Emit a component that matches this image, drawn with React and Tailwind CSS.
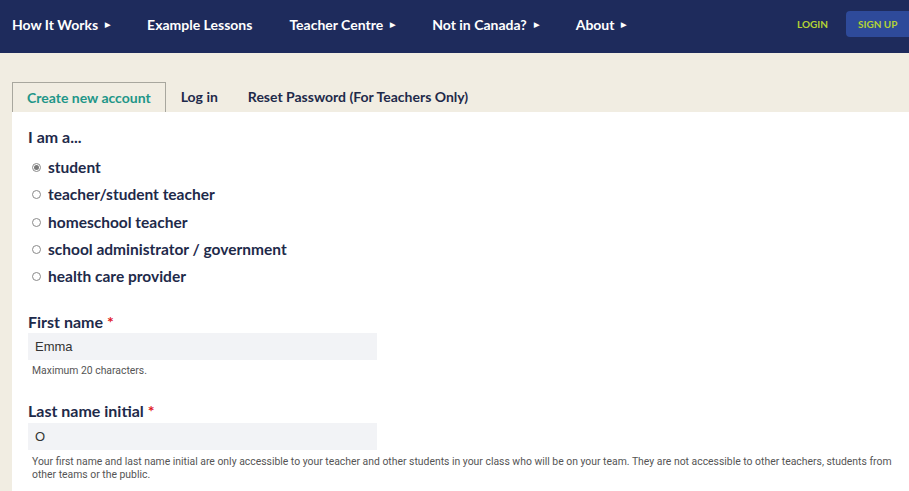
import React from "react";

const navItems = [
  { label: "How It Works", arrow: true },
  { label: "Example Lessons", arrow: false },
  { label: "Teacher Centre", arrow: true },
  { label: "Not in Canada?", arrow: true },
  { label: "About", arrow: true },
];

const roles = [
  "student",
  "teacher/student teacher",
  "homeschool teacher",
  "school administrator / government",
  "health care provider",
];

const Radio = ({ checked }) => (
  <span className="flex h-[9px] w-[9px] items-center justify-center rounded-full border border-[#8a8a8a] bg-white">
    {checked && <span className="h-[5px] w-[5px] rounded-full bg-[#7a7a7a]" />}
  </span>
);

const App = () => {
  return (
    <div className="min-h-[491px] w-full bg-[#f1ede2] font-['Lato',sans-serif] text-[#1e2a4a]">
      <nav className="flex h-[53px] items-center bg-[#1e2b5c] pb-[5px] pl-3 pr-0">
        <ul className="flex items-center">
          {navItems.map((item, i) => (
            <li
              key={item.label}
              className={`flex items-center gap-[7px] text-[14px] font-bold text-white ${i > 0 ? "ml-[37px]" : ""}`}
            >
              {item.label}
              {item.arrow && <span className="text-[7px]">▶</span>}
            </li>
          ))}
        </ul>
        <div className="ml-auto flex items-center gap-[18px]">
          <span className="text-[10px] font-bold text-[#b4d334]">LOGIN</span>
          <span className="flex h-[26px] w-[63px] items-center rounded-l-[4px] bg-[#2e4a9a] pl-[12px] text-[10px] font-bold text-[#b4d334]">
            SIGN UP
          </span>
        </div>
      </nav>

      <div className="pl-3 pt-[29px]">
        <div className="flex items-end border-b border-[#a8a79e]">
          <div className="-mb-px border border-b-0 border-[#a8a79e] bg-[#f1ede2] px-[14px] py-[5px] text-[14px] font-bold leading-[20px] text-[#1f9688]">
            Create new account
          </div>
          <div className="px-[15px] py-[5px] text-[14px] font-bold leading-[20px]">Log in</div>
          <div className="px-[15px] py-[5px] text-[14px] font-bold leading-[20px]">Reset Password (For Teachers Only)</div>
        </div>

        <div className="relative -mt-px bg-white pb-4 pl-4 pt-[16px]">
          <div className="absolute left-px top-0 h-px w-[151px] bg-white" />
          <p className="text-[16px] font-bold leading-[18px]">I am a...</p>
          <div className="mt-[8px] flex flex-col">
            {roles.map((r, i) => (
              <label key={r} className="flex h-[27.3px] items-center gap-[7px] pl-[4px] text-[15.5px] font-bold">
                <Radio checked={i === 0} />
                {r}
              </label>
            ))}
          </div>

          <div className="mt-[23px]">
            <p className="text-[16px] font-bold leading-[18px]">
              First name <span className="text-[#e0161e]">*</span>
            </p>
            <div className="mt-[2px] flex h-[27px] w-[349px] items-center bg-[#f2f3f6] px-[7px] font-['Liberation_Sans',sans-serif] text-[13px] text-[#333]">
              Emma
            </div>
            <p className="mt-[3px] pl-[4px] font-['Roboto',sans-serif] text-[10.4px] text-[#555]">Maximum 20 characters.</p>
          </div>

          <div className="mt-[23px]">
            <p className="text-[16px] font-bold leading-[18px]">
              Last name initial <span className="text-[#e0161e]">*</span>
            </p>
            <div className="mt-[3px] flex h-[27px] w-[349px] items-center bg-[#f2f3f6] px-[7px] font-['Liberation_Sans',sans-serif] text-[13px] text-[#333]">
              O
            </div>
            <p className="mt-[5px] pl-[4px] pr-3 font-['Roboto',sans-serif] text-[10.4px] leading-[13px] text-[#555]">
              Your first name and last name initial are only accessible to your teacher and other students in your class who will be on your team. They are not accessible to other teachers, students from other teams or the public.
            </p>
          </div>
        </div>
      </div>
    </div>
  );
};

export default App;
